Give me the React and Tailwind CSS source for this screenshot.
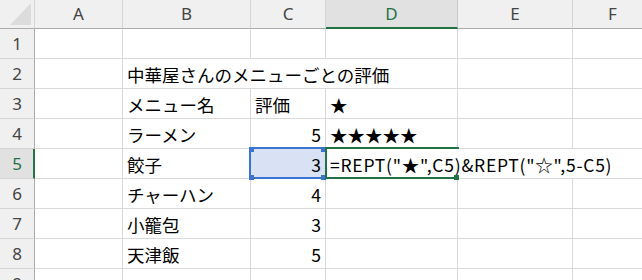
import React from "react";

const COLS = [
  { key: "A", w: "w-[88px]" },
  { key: "B", w: "w-[128px]" },
  { key: "C", w: "w-[75px]" },
  { key: "D", w: "w-[132px]" },
  { key: "E", w: "w-[115px]" },
  { key: "F", w: "w-[80px]" },
];

const JP = { fontFamily: '"Noto Sans CJK JP", "Noto Sans", sans-serif' };

const ROWS = [
  { n: 1, cells: {} },
  {
    n: 2,
    cells: {
      B: { t: "中華屋さんのメニューごとの評価", noRight: true },
      C: { noRight: true },
    },
  },
  { n: 3, cells: { B: { t: "メニュー名" }, C: { t: "評価" }, D: { t: "★" } } },
  { n: 4, cells: { B: { t: "ラーメン" }, C: { t: "5", r: true }, D: { t: "★★★★★" } } },
  {
    n: 5,
    sel: true,
    cells: {
      B: { t: "餃子" },
      C: { t: "3", r: true, hl: true },
      D: { t: '=REPT("★",C5)&REPT("☆",5-C5)', noRight: true, wide: true },
      E: { noRight: true },
    },
  },
  { n: 6, cells: { B: { t: "チャーハン" }, C: { t: "4", r: true } } },
  { n: 7, cells: { B: { t: "小籠包" }, C: { t: "3", r: true } } },
  { n: 8, cells: { B: { t: "天津飯" }, C: { t: "5", r: true } } },
  { n: 9, cells: {} },
];

function Cell({ w, cell }) {
  const c = cell || {};
  return (
    <div
      className={`${w} h-[30px] shrink-0 box-border border-b border-[#d9d9d9] ${
        c.noRight ? "" : "border-r"
      } ${c.hl ? "bg-[#d9e1f4]" : ""} flex items-center ${
        c.r ? "justify-end pr-[4px]" : "pl-[4px]"
      } overflow-visible whitespace-nowrap text-[17.5px] text-black pt-[3px] ${
        c.wide ? "tracking-[0.75px]" : ""
      }`}
      style={JP}
    >
      {c.t ? <span className="leading-none">{c.t}</span> : null}
    </div>
  );
}

function Handle({ className, color }) {
  return <div className={`absolute w-[5px] h-[5px] ${color} ${className}`} />;
}

export default function App() {
  return (
    <div className="relative w-[642px] h-[280px] overflow-hidden bg-white">
      {/* header row */}
      <div className="flex h-[29px]">
        <div className="relative w-[35px] h-[29px] shrink-0 box-border bg-[#f0f0f0] border-r border-b border-r-[#d4d4d4] border-b-[#ababab]">
          <svg className="absolute left-0 top-0" width="35" height="29" viewBox="0 0 35 29">
            <polygon points="10,25 31,3 31,25" fill="#dcdcdc" />
          </svg>
        </div>
        {COLS.map((c) => {
          const sel = c.key === "D";
          return (
            <div
              key={c.key}
              className={`${c.w} h-[29px] shrink-0 box-border border-r flex items-center justify-center text-[17px] ${
                sel
                  ? "bg-[#e1e1e1] text-[#217346] border-b-2 border-b-[#217346] border-r-[#c8c8c8]"
                  : "bg-[#f0f0f0] text-[#444444] border-b border-b-[#ababab] border-r-[#d4d4d4]"
              }`}
              style={{ fontFamily: '"Noto Sans", sans-serif' }}
            >
              {c.key}
            </div>
          );
        })}
      </div>
      {ROWS.map((row) => (
        <div key={row.n} className="flex h-[30px]">
          <div
            className={`w-[35px] h-[30px] shrink-0 box-border border-b border-b-[#d4d4d4] flex items-center justify-center text-[17px] ${
              row.sel
                ? "bg-[#e1e1e1] text-[#217346] border-r-2 border-r-[#217346] pl-[1px]"
                : "bg-[#f0f0f0] text-[#444444] border-r border-r-[#ababab]"
            }`}
            style={{ fontFamily: '"Noto Sans", sans-serif' }}
          >
            {row.n}
          </div>
          {COLS.map((c) => (
            <Cell key={c.key} w={c.w} cell={row.cells[c.key]} />
          ))}
        </div>
      ))}

      {/* C5 reference highlight (blue) with corner handles */}
      <div className="absolute left-[249px] top-[147px] w-[78px] h-[32px] box-border border-2 border-[#3b73d0] pointer-events-none">
        <Handle color="bg-[#3b73d0]" className="-left-[2px] -top-[2px]" />
        <Handle color="bg-[#3b73d0]" className="-right-[1px] -top-[2px]" />
        <Handle color="bg-[#3b73d0]" className="-left-[2px] -bottom-[3px]" />
        <Handle color="bg-[#3b73d0]" className="-right-[1px] -bottom-[3px]" />
      </div>

      {/* D5 active cell (green, open right side) */}
      <div className="absolute left-[325px] top-[147px] w-[134px] h-[32px] box-border border-2 border-r-0 border-[#217346] pointer-events-none">
        <Handle color="bg-[#217346]" className="right-0 -bottom-[3px]" />
      </div>
    </div>
  );
}
